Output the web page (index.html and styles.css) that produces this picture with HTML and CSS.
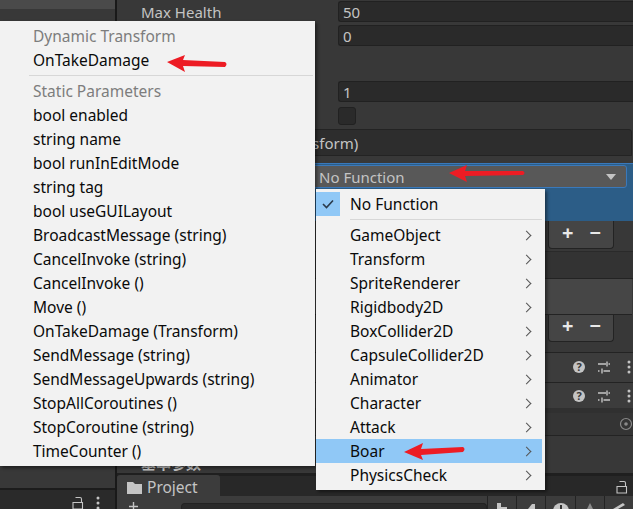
FILE: index.html
```html
<!DOCTYPE html>
<html>
<head>
  <meta charset="UTF-8">
  <title>Inspector</title>
  <link rel="stylesheet" href="styles.css">
</head>
<body>
  <div class="app">
    <div class="side">
      <div class="side-top"></div>
      <div class="side-mid"></div>
      <div class="side-bar">
        <svg width="12" height="14" viewBox="0 0 12 14"><path d="M9.500 6V3C9.500 2 9 1.500 8 1.500H3.500M1 6.500H10.500V13H1Z" fill="none" stroke="#c4c4c4" stroke-width="1.100"/></svg>
        <svg width="4" height="14" viewBox="0 0 4 14"><circle cx="2" cy="2" r="1.500" fill="#c4c4c4"/><circle cx="2" cy="7" r="1.500" fill="#c4c4c4"/><circle cx="2" cy="12" r="1.500" fill="#c4c4c4"/></svg>
      </div>
    </div>

    <div class="main">
      <div class="inspector">
        <div class="field field-first"><span class="label">Max Health</span><div class="input">50</div></div>
        <div class="field"><span class="label"></span><div class="input">0</div></div>
        <div class="field field-gap"><span class="label"></span><div class="input">1</div></div>
        <div class="field"><span class="label"></span><div class="checkbox"></div></div>

        <div class="object-field">OnTakeDamage (Transform)</div>
        <div class="event-panel">
          <div class="dropdown"><span>No Function</span><i class="caret"></i></div>
        </div>
        <div class="list-footer"><span class="plus">+</span><span class="minus">−</span></div>

        <div class="band"></div>
        <div class="event-empty"></div>
        <div class="list-footer list-footer-two"><span class="plus">+</span><span class="minus">−</span></div>

        <div class="comp-row comp-row-one">
          <svg width="62" height="16" viewBox="0 0 62 16">
            <circle cx="7" cy="8" r="6" fill="#c4c4c4"/>
            <text x="7" y="12" class="help-mark">?</text>
            <path d="M26 5H34M36.500 5H38M26 12H27.500M31.500 12H38M35 2.500V7.500M30 9.500V14.500" stroke="#c4c4c4" stroke-width="1.400" fill="none"/>
            <circle cx="57" cy="3" r="1.500" fill="#c4c4c4"/><circle cx="57" cy="8" r="1.500" fill="#c4c4c4"/><circle cx="57" cy="13" r="1.500" fill="#c4c4c4"/>
          </svg>
        </div>
        <div class="comp-row comp-row-two">
          <svg width="62" height="16" viewBox="0 0 62 16">
            <circle cx="7" cy="8" r="6" fill="#c4c4c4"/>
            <text x="7" y="12" class="help-mark">?</text>
            <path d="M26 5H34M36.500 5H38M26 12H27.500M31.500 12H38M35 2.500V7.500M30 9.500V14.500" stroke="#c4c4c4" stroke-width="1.400" fill="none"/>
            <circle cx="57" cy="3" r="1.500" fill="#c4c4c4"/><circle cx="57" cy="8" r="1.500" fill="#c4c4c4"/><circle cx="57" cy="13" r="1.500" fill="#c4c4c4"/>
          </svg>
        </div>
        <div class="slot-row">
          <svg width="14" height="14" viewBox="0 0 14 14"><circle cx="7" cy="7" r="5.500" fill="none" stroke="#8a8a8a" stroke-width="1.200"/><circle cx="7" cy="7" r="1.800" fill="#8a8a8a"/></svg>
        </div>
        <div class="section-title">基本参数</div>
      </div>

      <div class="project-bar">
        <div class="tab">
          <svg width="15" height="13" viewBox="0 0 15 13"><path d="M0 1H6L8 3H15V13H0Z" fill="#c4c4c4"/></svg>
          <span>Project</span>
        </div>
        <svg class="lock-icon" width="12" height="14" viewBox="0 0 12 14"><path d="M9.500 6V3C9.500 2 9 1.500 8 1.500H3.500M1 6.500H10.500V13H1Z" fill="none" stroke="#c4c4c4" stroke-width="1.100"/></svg>
      </div>
      <div class="toolbar">
        <svg class="add-btn" width="9" height="9" viewBox="0 0 9 9"><path d="M4.500 0V9M0 4.500H9" stroke="#c4c4c4" stroke-width="1.400"/></svg>
        <div class="search"></div>
        <div class="tool"><svg width="12" height="6" viewBox="0 0 12 6"><path d="M1 0H5V4H11V6H1Z" fill="#c4c4c4"/></svg></div>
        <div class="tool"><svg width="12" height="6" viewBox="0 0 12 6"><path d="M3 6L7 1H10V6Z" fill="#c4c4c4"/></svg></div>
        <div class="tool"><svg width="16" height="6" viewBox="0 0 16 6"><circle cx="8" cy="8" r="8" fill="#c4c4c4"/><rect x="7" y="2" width="2" height="4" fill="#333"/></svg></div>
        <div class="tool"><svg width="12" height="6" viewBox="0 0 12 6"><path d="M6 0L9 6H3Z" fill="#8c8c8c"/></svg></div>
        <div class="tool"><svg width="14" height="6" viewBox="0 0 14 6"><path d="M1 6L11 0L13 2L6 6Z" fill="#c4c4c4"/></svg></div>
      </div>
    </div>
  </div>

  <!-- popup menus -->
  <ul class="menu menu-params">
    <li class="menu-head">Dynamic Transform</li>
    <li>OnTakeDamage</li>
    <li class="menu-sep"></li>
    <li class="menu-head">Static Parameters</li>
    <li>bool enabled</li>
    <li>string name</li>
    <li>bool runInEditMode</li>
    <li>string tag</li>
    <li>bool useGUILayout</li>
    <li>BroadcastMessage (string)</li>
    <li>CancelInvoke (string)</li>
    <li>CancelInvoke ()</li>
    <li>Move ()</li>
    <li>OnTakeDamage (Transform)</li>
    <li>SendMessage (string)</li>
    <li>SendMessageUpwards (string)</li>
    <li>StopAllCoroutines ()</li>
    <li>StopCoroutine (string)</li>
    <li>TimeCounter ()</li>
  </ul>

  <ul class="menu menu-functions">
    <li class="checked">
      <span class="check"><svg width="12" height="10" viewBox="0 0 12 10"><path d="M1 5L4.500 8.500L11 1.500" fill="none" stroke="#2b3a4a" stroke-width="1.600"/></svg></span>
      No Function
    </li>
    <li class="menu-sep"></li>
    <li class="sub">GameObject</li>
    <li class="sub">Transform</li>
    <li class="sub">SpriteRenderer</li>
    <li class="sub">Rigidbody2D</li>
    <li class="sub">BoxCollider2D</li>
    <li class="sub">CapsuleCollider2D</li>
    <li class="sub">Animator</li>
    <li class="sub">Character</li>
    <li class="sub">Attack</li>
    <li class="sub active">Boar</li>
    <li class="sub">PhysicsCheck</li>
  </ul>

  <!-- red annotation arrows -->
  <svg class="marks" width="633" height="509" viewBox="0 0 633 509">
    <path d="M167 62L185 55L183 60L225 62Q228 64 225 67L183 66L185 72Z" fill="#ed1c24"/>
    <path d="M449 173L467 165L465 171L523 171Q526 173 523 175L465 176L467 182Z" fill="#ed1c24"/>
    <path d="M404 452L423 443L421 449L463 447Q466 449 463 452L421 455L423 460Z" fill="#ed1c24"/>
  </svg>
</body>
</html>
```

FILE: styles.css
```css
* {
  box-sizing: border-box;
}

body {
  margin: 0;
  width: 633px;
  height: 509px;
  overflow: hidden;
  position: relative;
  background: #191919;
  color: #c4c4c4;
  font-family: "Noto Sans", sans-serif;
  font-size: 15px;
}

.app {
  display: flex;
  height: 509px;
}

/* left column */
.side {
  width: 115px;
  display: flex;
  flex-direction: column;
  flex-shrink: 0;
}

.side-top {
  height: 9px;
  background: #4a4a4a;
}

.side-mid {
  flex: 1;
  background: #383838;
  border-bottom: 2px solid #1c1c1c;
}

.side-bar {
  height: 19px;
  background: #2a2a2a;
  display: flex;
  justify-content: flex-end;
  align-items: flex-start;
  gap: 12px;
  padding: 6px 15px 0 0;
}

/* inspector */
.main {
  flex: 1;
  margin-left: 2px;
  display: flex;
  flex-direction: column;
  min-width: 0;
}

.inspector {
  height: 476px;
  background: #383838;
  overflow: hidden;
  border-bottom: 3px solid #1f1f1f;
}

.field {
  display: flex;
  align-items: center;
  height: 21px;
  margin-bottom: 3px;
}

.field-first {
  margin-top: 1px;
}

.field-gap {
  margin-top: 35px;
}

.label {
  width: 221px;
  padding-left: 24px;
  flex-shrink: 0;
}

.input {
  flex: 1;
  height: 21px;
  line-height: 20px;
  padding-left: 4px;
  background: #2a2a2a;
  border: 1px solid #212121;
  border-radius: 3px 0 0 3px;
  border-right: none;
}

.checkbox {
  width: 18px;
  height: 18px;
  background: #2a2a2a;
  border: 1px solid #212121;
  border-radius: 3px;
}

.object-field {
  height: 27px;
  margin: 2px 1px 0 8px;
  padding-left: 34px;
  line-height: 26px;
  white-space: nowrap;
  background: #2d2d2d;
  border: 1px solid #232323;
  border-radius: 3px 3px 0 0;
}

.event-panel {
  height: 58px;
  margin: 7px 0 0 8px;
  padding: 1px 6px 0 0;
  background: #2c5d87;
  border-top: 1px solid #3a79bb;
  display: flex;
  justify-content: flex-end;
  align-items: flex-start;
}

.dropdown {
  width: 400px;
  height: 23px;
  padding: 0 10px 0 91px;
  display: flex;
  align-items: center;
  justify-content: space-between;
  background: #585858;
  border: 1px solid #3a79bb;
  border-radius: 3px;
}

.caret {
  width: 0;
  height: 0;
  border-left: 5px solid transparent;
  border-right: 5px solid transparent;
  border-top: 6px solid #c4c4c4;
}

.list-footer {
  width: 66px;
  height: 28px;
  margin-left: 431px;
  padding: 0 0 4px 13px;
  display: flex;
  gap: 16px;
  align-items: center;
  color: #e8e8e8;
  font-size: 20px;
  font-weight: bold;
  background: #454545;
  border: 1px solid #232323;
  border-top: none;
  border-radius: 0 0 4px 4px;
}

.plus, .minus {
  line-height: 1;
}

.band {
  height: 28px;
  margin: 2px 0 0 8px;
  background: #333333;
  border-top: 1px solid #2a2a2a;
  border-bottom: 1px solid #232323;
}

.event-empty {
  height: 36px;
  margin-left: 8px;
  margin-right: 1px;
  background: #464646;
  border-bottom: 1px solid #232323;
}

.list-footer-two {
  height: 27px;
}

.comp-row {
  display: flex;
  align-items: center;
  justify-content: flex-end;
  background: #3c3c3c;
  border-top: 1px solid #232323;
}

.comp-row svg {
  margin-right: -1px;
}

.comp-row-one {
  height: 30px;
  margin-top: 10px;
  padding-bottom: 2px;
}

.comp-row-two {
  height: 26px;
}

.help-mark {
  fill: #383838;
  font-size: 11px;
  font-weight: bold;
  text-anchor: middle;
}

.slot-row {
  height: 28px;
  display: flex;
  align-items: center;
  justify-content: flex-end;
  background: #343434;
  border-top: 5px solid #303030;
  border-bottom: 1px solid #232323;
}

.section-title {
  padding: 17px 0 0 24px;
  line-height: 20px;
  font-weight: bold;
  font-family: "Noto Sans CJK SC", sans-serif;
}

.project-bar {
  height: 20px;
  background: #282828;
  display: flex;
  justify-content: space-between;
  align-items: flex-start;
}

.tab {
  width: 103px;
  height: 24px;
  margin-top: -1px;
  padding-left: 10px;
  display: flex;
  align-items: center;
  gap: 5px;
  font-size: 15.5px;
  background: #3c3c3c;
  border-radius: 3px 3px 0 0;
  position: relative;
}

.project-bar .lock-icon {
  margin: 4px 5px 0 0;
}

.toolbar {
  height: 13px;
  background: #3c3c3c;
  display: flex;
  align-items: flex-start;
  position: relative;
}

.add-btn {
  margin: 6px 43px 0 12px;
  flex-shrink: 0;
}

.search {
  width: 306px;
  height: 7px;
  margin-top: 7px;
  background: #2a2a2a;
  border: 1px solid #232323;
  border-bottom: none;
  border-radius: 4px 4px 0 0;
}

.tool {
  flex: 1;
  height: 13px;
  display: flex;
  justify-content: center;
  align-items: flex-start;
  padding-top: 7px;
  border-left: 1px solid #232323;
}

/* popup menus */
.menu {
  position: absolute;
  margin: 0;
  padding: 3px 0;
  list-style: none;
  color: #0a0a0a;
  background: #f2f2f2;
  font-size: 15.5px;
  box-shadow: 2px 2px 3px rgba(0, 0, 0, 0.45);
}

.menu li {
  height: 24px;
  line-height: 24px;
  white-space: nowrap;
}

.menu li.menu-head {
  color: #7d7d7d;
}

.menu li.menu-sep {
  height: 7px;
  position: relative;
}

.menu li.menu-sep::after {
  content: '';
  position: absolute;
  top: 3px;
  left: 29px;
  right: 2px;
  height: 1px;
  background: #d7d7d7;
}

.menu-params {
  top: 21px;
  left: 0;
  width: 315px;
}

.menu-params li {
  padding-left: 33px;
}

.menu-params li.menu-sep {
  padding: 0;
}

.menu-functions {
  top: 189px;
  left: 316px;
  width: 229px;
}

.menu-functions li {
  padding-left: 34px;
  margin-right: 3px;
  position: relative;
}

.menu-functions li.menu-sep {
  padding: 0;
}

.menu-functions li.menu-sep::after {
  left: 34px;
  right: 0;
}

.check {
  position: absolute;
  top: 0;
  left: 0;
  width: 24px;
  height: 24px;
  display: flex;
  align-items: center;
  justify-content: center;
  background: #90c8f6;
}

.sub::after {
  content: '';
  position: absolute;
  top: 9px;
  right: 12px;
  width: 6px;
  height: 6px;
  border-top: 1px solid #555;
  border-right: 1px solid #555;
  transform: rotate(45deg);
}

.menu li.active {
  background: #90c8f6;
}

.marks {
  position: absolute;
  top: 0;
  left: 0;
}
```
